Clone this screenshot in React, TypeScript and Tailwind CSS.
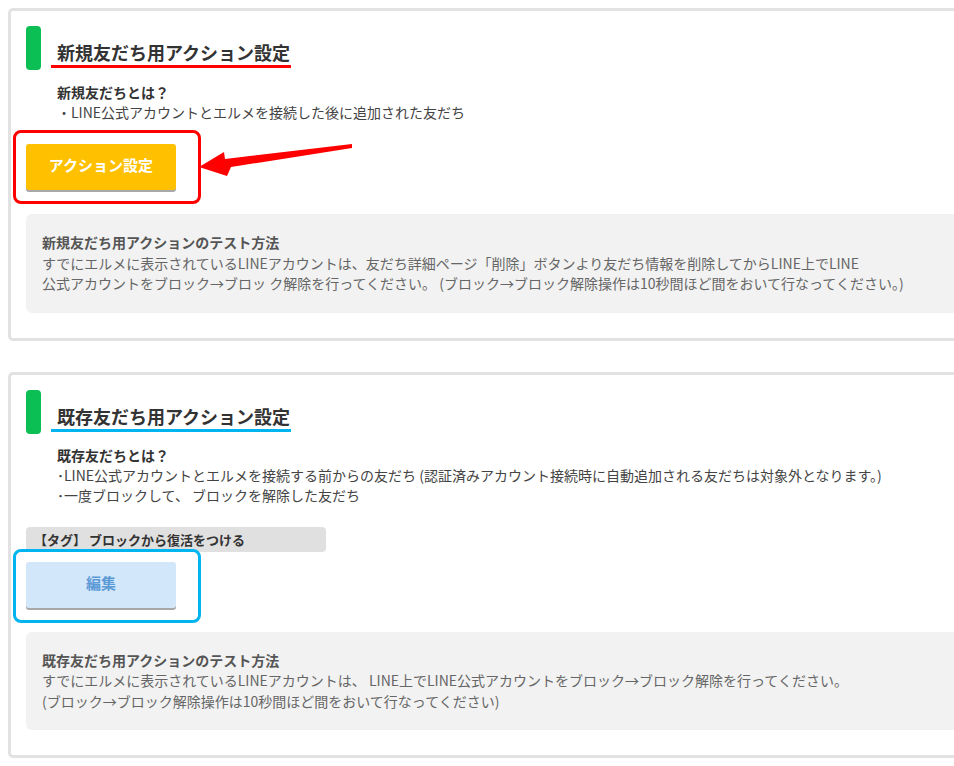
import React from 'react';

const font = { fontFamily: '"Noto Sans CJK JP", "Noto Sans", sans-serif' };

function SectionHeader({ title, lineColor }: { title: string; lineColor: string }) {
  return (
    <div className="flex items-end">
      <div className="w-[15px] h-[44px] rounded-[4px] bg-[#0bbf55]" />
      <h2
        className={`ml-[10px] mb-[2px] pl-[6px] pr-[1px] text-[18px] leading-[26px] font-bold text-[#333] border-b-[3px] ${lineColor}`}
      >
        {title}
      </h2>
    </div>
  );
}

function TestBox({ heading, lines }: { heading: string; lines: string[] }) {
  return (
    <div className="mr-[-4px] rounded-[6px] bg-[#f2f2f2] pl-[16px] pt-[18px] pb-[19px] text-[14px] leading-[20.5px] text-[#666]">
      <p className="font-bold text-[#555]">{heading}</p>
      {lines.map((l, i) => (
        <p key={i} className="whitespace-nowrap">
          {l}
        </p>
      ))}
    </div>
  );
}

export default function App() {
  return (
    <div className="relative h-[766px] w-[954px] overflow-hidden bg-white pl-[8px] pt-[8px]" style={font}>
      {/* card 1: new friends */}
      <div className="relative w-[975px] rounded-[5px] border-[3px] border-[#e2e2e2] pl-[15px] pr-[15px] pt-[15px] pb-[25px]">
        <SectionHeader title="新規友だち用アクション設定" lineColor="border-[#ff0000]" />
        <div className="mt-[12px] pl-[31px] text-[14px] leading-[20px] text-[#444]">
          <p className="font-bold text-[#333]">新規友だちとは？</p>
          <p>・LINE公式アカウントとエルメを接続した後に追加された友だち</p>
        </div>
        <div className="mt-[8px] ml-[-13px] h-[74px] w-[188px] rounded-[8px] border-[3px] border-[#ff0000] pl-[10px] pt-[11px]">
          <button className="h-[46px] w-[150px] rounded-[3px] bg-[#ffc000] pb-[4px] text-[15px] font-bold text-white shadow-[0_2px_0_#a8a8a8]">
            アクション設定
          </button>
        </div>
        <svg className="absolute left-[185px] top-[128px] h-[50px] w-[170px]" viewBox="0 0 170 50">
          <polygon
            points="3,28 28,13 29,20 156,5 156,9 35,28 31,37"
            fill="#ff0000"
          />
        </svg>
        <div className="mt-[10px]">
          <TestBox
            heading="新規友だち用アクションのテスト方法"
            lines={[
              'すでにエルメに表示されているLINEアカウントは、友だち詳細ページ「削除」ボタンより友だち情報を削除してからLINE上でLINE',
              '公式アカウントをブロック→ブロッ ク解除を行ってください。 (ブロック→ブロック解除操作は10秒間ほど間をおいて行なってください。)',
            ]}
          />
        </div>
      </div>

      {/* card 2: existing friends */}
      <div className="mt-[31px] w-[975px] rounded-[5px] border-[3px] border-[#e2e2e2] pl-[15px] pr-[15px] pt-[15px] pb-[25px]">
        <SectionHeader title="既存友だち用アクション設定" lineColor="border-[#00b4ef]" />
        <div className="mt-[11px] pl-[31px] text-[14px] leading-[20px] text-[#444]">
          <p className="font-bold text-[#333]">既存友だちとは？</p>
          <p>･LINE公式アカウントとエルメを接続する前からの友だち (認証済みアカウント接続時に自動追加される友だちは対象外となります。)</p>
          <p>･一度ブロックして、 ブロックを解除した友だち</p>
        </div>
        <div className="mt-[22px] h-[25px] w-[300px] rounded-[4px] bg-[#e0e0e0] pl-[8px] text-[13px] font-bold leading-[25px] text-[#333]">
          【タグ】 ブロックから復活をつける
        </div>
        <div className="relative mt-[-3px] ml-[-13px] h-[74px] w-[188px] rounded-[8px] border-[3px] border-[#00b4ef] pl-[10px] pt-[10px]">
          <button className="h-[46px] w-[150px] rounded-[3px] bg-[#d3e7fb] pb-[2px] text-[15px] font-bold text-[#5c9ad6] shadow-[0_2px_0_#a8a8a8]">
            編集
          </button>
        </div>
        <div className="mt-[9px]">
          <TestBox
            heading="既存友だち用アクションのテスト方法"
            lines={[
              'すでにエルメに表示されているLINEアカウントは、 LINE上でLINE公式アカウントをブロック→ブロック解除を行ってください。',
              '(ブロック→ブロック解除操作は10秒間ほど間をおいて行なってください)',
            ]}
          />
        </div>
      </div>
    </div>
  );
}
